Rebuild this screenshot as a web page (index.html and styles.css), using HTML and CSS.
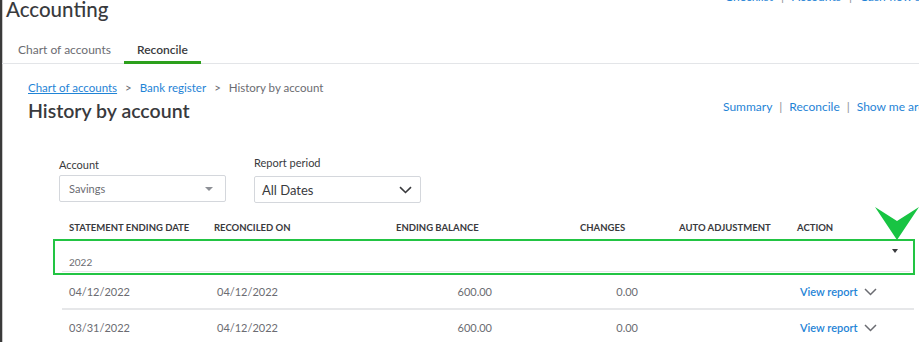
FILE: index.html
```html
<!DOCTYPE html>
<html>
<head>
<meta charset="utf-8">
<link rel="stylesheet" href="styles.css">
</head>
<body>
<div class="frame">
  <header class="top">
    <h1 class="app-title">Accounting</h1>
    <nav class="top-links">
      <a>Checklist</a><span class="sep">|</span><a>Accounts</a><span class="sep">|</span><a>Cash flow sp</a>
    </nav>
  </header>
  <nav class="tabs">
    <a class="tab">Chart of accounts</a>
    <a class="tab active">Reconcile</a>
  </nav>
  <main class="content">
    <div class="page-head">
      <div>
        <div class="crumbs"><a class="crumb-link">Chart of accounts</a><span class="gt">&gt;</span><a class="crumb">Bank register</a><span class="gt">&gt;</span><span class="crumb-cur">History by account</span></div>
        <h2 class="page-title">History by account</h2>
      </div>
      <div class="page-links"><a>Summary</a><span class="sep">|</span><a>Reconcile</a><span class="sep">|</span><a>Show me around</a></div>
    </div>
    <div class="filters">
      <label class="field">
        <span class="field-label">Account</span>
        <span class="select small">Savings<span class="tri"></span></span>
      </label>
      <label class="field">
        <span class="field-label">Report period</span>
        <span class="select big">All Dates<svg class="chev" width="13" height="8" viewBox="0 0 13 8"><path d="M1 1.2l5.5 5.3 5.5-5.3" fill="none" stroke="#393a3d" stroke-width="1.6"/></svg></span>
      </label>
    </div>
    <div class="table">
      <div class="thead grid">
        <span>STATEMENT ENDING DATE</span>
        <span>RECONCILED ON</span>
        <span>ENDING BALANCE</span>
        <span class="pl88">CHANGES</span>
        <span class="pl41">AUTO ADJUSTMENT</span>
        <span>ACTION</span>
      </div>
      <div class="group">
        <div class="group-inner">
          <span class="year">2022</span>
          <span class="caret"></span>
        </div>
      </div>
      <div class="row grid">
        <span>04/12/2022</span>
        <span class="d2">04/12/2022</span>
        <span class="num">600.00</span>
        <span class="num">0.00</span>
        <span></span>
        <span class="act"><a>View report</a><svg width="13" height="8" viewBox="0 0 13 8"><path d="M1 1l5.5 5.5L12 1" fill="none" stroke="#6b6c72" stroke-width="1.5"/></svg></span>
      </div>
      <div class="row grid">
        <span>03/31/2022</span>
        <span class="d2">04/12/2022</span>
        <span class="num">600.00</span>
        <span class="num">0.00</span>
        <span></span>
        <span class="act"><a>View report</a><svg width="13" height="8" viewBox="0 0 13 8"><path d="M1 1l5.5 5.5L12 1" fill="none" stroke="#6b6c72" stroke-width="1.5"/></svg></span>
      </div>
    </div>
  </main>
  <svg class="pointer" width="46" height="35" viewBox="0 0 46 35"><path d="M1 1L23 15L45 1L23 34Z" fill="#18c443"/></svg>
</div>
</body>
</html>
```
FILE: styles.css
```css
* { box-sizing: border-box; }
html, body { margin: 0; padding: 0; background: #fff; }
body {
  font-family: Lato, "Noto Sans", sans-serif;
  color: #393a3d;
  width: 919px;
  height: 342px;
  overflow: hidden;
}
a { color: #1f84d6; text-decoration: none; }
.frame {
  position: relative;
  height: 342px;
  border-left: 2px solid #3a3a3a;
  box-shadow: inset 1px 0 0 #c8c8c8;
}
.top {
  display: flex;
  justify-content: space-between;
  align-items: flex-start;
  padding-left: 4px;
  height: 36px;
}
.app-title {
  margin: -4px 0 0;
  font-size: 20.5px;
  font-weight: 500;
  line-height: 26px;
  color: #393a3d;
}
.top-links {
  margin-top: -9px;
  font-size: 12px;
  line-height: 12px;
  white-space: nowrap;
  width: 194px;
  overflow: hidden;
}
.sep { color: #8d9096; margin: 0 8px; }
.tabs {
  display: flex;
  padding-left: 3px;
  border-bottom: 1px solid #e3e5e8;
  height: 28px;
}
.tab {
  padding: 6px 13px 0;
  font-size: 12px;
  color: #6b6c72;
  height: 28px;
}
.tab.active {
  color: #393a3d;
  font-weight: 600;
  border-bottom: 3px solid #2ca01c;
  margin-bottom: -1px;
}
.content { padding-left: 26px; }
.page-head {
  display: flex;
  justify-content: space-between;
  padding-top: 17px;
}
.crumbs { font-size: 11.5px; line-height: 14px; color: #6b6c72; }
.crumb-link { text-decoration: underline; }
.gt { margin: 0 8px 0 8px; color: #6b6c72; }
.crumb-cur { color: #6b6c72; }
.page-title {
  margin: 4px 0 0;
  font-size: 19.5px;
  line-height: 24px;
  font-weight: 600;
  color: #393a3d;
}
.page-links {
  margin-top: 18px;
  font-size: 12px;
  white-space: nowrap;
  width: 196px;
  overflow: hidden;
}
.page-links .sep { margin: 0 7px; }
.filters {
  display: flex;
  gap: 28px;
  padding-left: 31px;
  margin-top: 35px;
}
.field { display: flex; flex-direction: column; }
.field-label { font-size: 11px; line-height: 14px; color: #393a3d; margin-bottom: 3px; }
.field:nth-child(2) .field-label { margin-top: -2px; margin-bottom: 6px; }
.select {
  display: flex;
  align-items: center;
  justify-content: space-between;
  border: 1px solid #d4d7dc;
  border-radius: 2px;
  color: #6b6c72;
}
.select.small { width: 167px; height: 27px; font-size: 11px; padding: 0 12px 0 9px; }
.select.big { width: 167px; height: 27px; font-size: 13px; color: #393a3d; padding: 0 8px 0 7px; }
.tri {
  width: 0; height: 0;
  border-left: 4px solid transparent;
  border-right: 4px solid transparent;
  border-top: 4px solid #8d9096;
}
.table { margin-top: 13px; margin-left: 25px; width: 862px; }
.grid {
  display: grid;
  grid-template-columns: 145px 182px 96px 146px 159px 1fr;
  align-items: center;
}
.thead {
  padding-left: 16px;
  height: 23px;
  font-size: 9.5px;
  font-weight: 700;
  color: #393a3d;
}
.pl88 { padding-left: 88px; }
.pl41 { padding-left: 41px; }
.group {
  border: 2px solid #22c443;
  height: 36px;
  padding: 0 3px 0 7px;
}
.group-inner {
  display: flex;
  justify-content: space-between;
  height: 31px;
  border-bottom: 1px solid #e6e7e9;
  padding-left: 7px;
  padding-right: 12px;
}
.year { align-self: flex-end; font-size: 10px; color: #6b6c72; padding-bottom: 3px; }
.caret {
  margin-top: 8px;
  width: 0; height: 0;
  border-left: 3.5px solid transparent;
  border-right: 3.5px solid transparent;
  border-top: 4px solid #393a3d;
}
.row {
  margin: 0 1px 0 9px;
  padding-left: 7px;
  height: 35px;
  border-bottom: 2px solid #e6e7e9;
  font-size: 11px;
  color: #6b6c72;
}
.row:last-child { border-bottom: none; }
.d2 { padding-left: 3px; }
.num { text-align: right; }
.act { display: flex; align-items: center; gap: 6px; padding-left: 3px; }
.act a { font-size: 11px; font-weight: 600; color: #1f84d6; }
.pointer { position: absolute; left: 872px; top: 206px; }
```
